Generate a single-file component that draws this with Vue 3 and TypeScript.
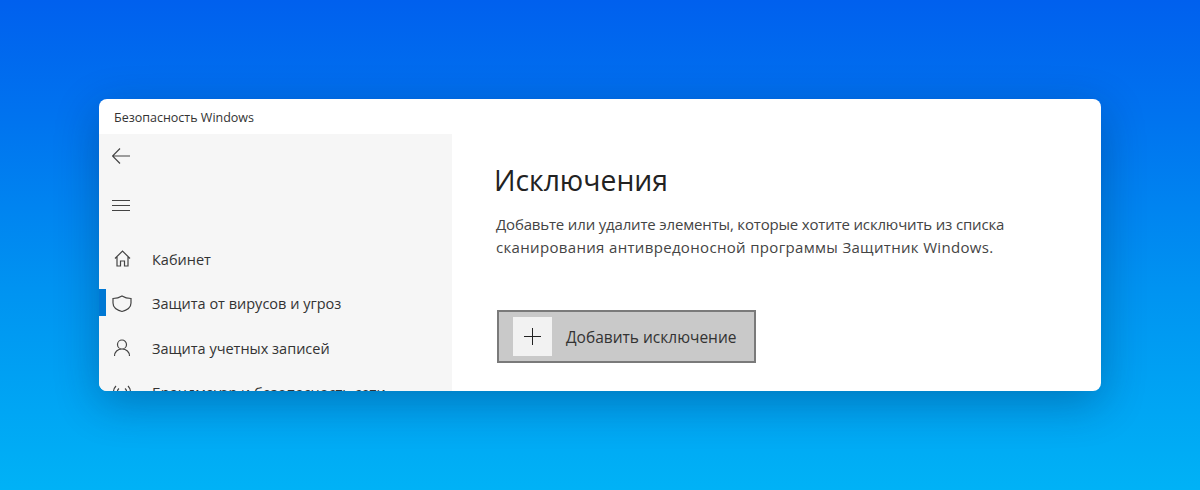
<template>
  <div class="desktop">
    <div class="window">
      <div class="titlebar">Безопасность Windows</div>
      <div class="body">
        <aside class="sidebar">
          <button class="tool back" aria-label="Назад">
            <svg width="18" height="16" viewBox="0 0 18 16"><path d="M8 .5.5 8 8 15.500M.5 8H18" /></svg>
          </button>
          <button class="tool menu" aria-label="Меню">
            <svg width="18" height="12" viewBox="0 0 18 12"><path d="M0 .5h18M0 5.500h18M0 10.500h18" /></svg>
          </button>
          <nav class="nav">
            <div v-for="item in items" :key="item.label" :class="['nav-item', { active: item.active }]">
              <svg class="nav-icon" width="20" height="20" viewBox="0 0 20 20"><path :d="item.icon" /></svg>
              <span>{{ item.label }}</span>
            </div>
          </nav>
        </aside>
        <main class="content">
          <h1>Исключения</h1>
          <p>
            <span class="line-one">Добавьте или удалите элементы, которые хотите исключить из списка</span>
            <span class="line-two">сканирования антивредоносной программы Защитник Windows.</span>
          </p>
          <button class="add">
            <span class="plus">
              <svg width="17" height="17" viewBox="0 0 17 17"><path d="M8.500 0v17M0 8.500h17" /></svg>
            </span>
            <span>Добавить исключение</span>
          </button>
        </main>
      </div>
    </div>
  </div>
</template>

<script setup lang="ts">
interface NavItem {
  label: string
  icon: string
  active?: boolean
}

const items: NavItem[] = [
  { label: 'Кабинет', icon: 'M3 9.500 10.500 2 18 9.500M5 7.500V17h3.500v-5h4v5H16V7.500' },
  {
    label: 'Защита от вирусов и угроз',
    icon: 'M10 2c2.800 1.800 6 2.500 9 2.500V9c0 4-3.500 7-9 8.500C4.500 16 1 13 1 9V4.500C4 4.500 7.200 3.800 10 2z',
    active: true,
  },
  {
    label: 'Защита учетных записей',
    icon: 'M10 2a4.500 4.500 0 1 0 0 9 4.500 4.500 0 0 0 0-9zM2.500 18c0-4 3-7 7.500-7s7.500 3 7.500 7',
  },
  {
    label: 'Брандмауэр и безопасность сети',
    icon: 'M10 9v9M7 5.500a4.500 4.500 0 0 0 0 7M13 5.500a4.500 4.500 0 0 1 0 7M4 3a8.500 8.500 0 0 0 0 12M16 3a8.500 8.500 0 0 1 0 12',
  },
]
</script>

<style>
html,
body {
  margin: 0;
  background: #0090f0;
}
</style>

<style scoped>
.desktop {
  width: 1200px;
  height: 490px;
  box-sizing: border-box;
  padding: 99px 99px 0;
  overflow: hidden;
  background: linear-gradient(180deg, #0060ee 0%, #0074ef 25%, #0094f1 60%, #00b2f6 100%);
  font-family: "Open Sans", "Noto Sans", sans-serif;
}
.window {
  width: 1002px;
  height: 292px;
  display: flex;
  flex-direction: column;
  background: #fff;
  border-radius: 8px;
  overflow: hidden;
  box-shadow: 0 12px 44px rgba(0, 30, 70, 0.32);
}
.titlebar {
  height: 35px;
  flex: none;
  padding-left: 15px;
  font-size: 12.500px;
  line-height: 37px;
  color: #333;
}
.body {
  flex: 1;
  display: flex;
  min-height: 0;
}
.sidebar {
  width: 353px;
  flex: none;
  background: #f6f6f6;
  color: #333;
}
button {
  font: inherit;
  border: 0;
  background: none;
  padding: 0;
}
svg {
  display: block;
}
svg path {
  fill: none;
  stroke: #444;
  stroke-width: 1.2;
}
.tool {
  display: block;
  margin-left: 13px;
}
.back {
  height: 16px;
  margin-top: 14px;
}
.menu {
  height: 12px;
  margin-top: 36px;
}
.nav {
  margin-top: 25px;
}
.nav-item {
  height: 44.500px;
  display: flex;
  align-items: center;
  gap: 20px;
  padding-left: 13px;
  font-size: 14.500px;
  position: relative;
  white-space: nowrap;
}
.nav-item.active::before {
  content: "";
  position: absolute;
  left: 0;
  top: 7px;
  width: 7px;
  height: 27px;
  background: #0078d4;
}
.nav-icon {
  flex: none;
}
.content {
  flex: 1;
  padding: 28px 0 0 42px;
  color: #444;
}
h1 {
  margin: 0;
  font-size: 28.300px;
  font-weight: 400;
  line-height: 36px;
  color: #222;
}
p {
  margin: 15px 0 0 2px;
  font-size: 15px;
  line-height: 23px;
}
.line-one,
.line-two {
  display: block;
  white-space: nowrap;
}
.line-one {
  letter-spacing: -0.17px;
}
.line-two {
  letter-spacing: 0.33px;
}
.add {
  margin: 51px 0 0 3px;
  width: 259px;
  height: 53px;
  box-sizing: border-box;
  display: flex;
  align-items: center;
  gap: 14px;
  padding-left: 14px;
  background: #c9c9c9;
  border: 2px solid #7a7a7a;
  color: #333;
  font-size: 15.500px;
}
.plus {
  width: 39px;
  height: 39px;
  display: flex;
  align-items: center;
  justify-content: center;
  background: #f2f2f2;
}
.plus path {
  stroke: #222;
  stroke-width: 1;
}
</style>
